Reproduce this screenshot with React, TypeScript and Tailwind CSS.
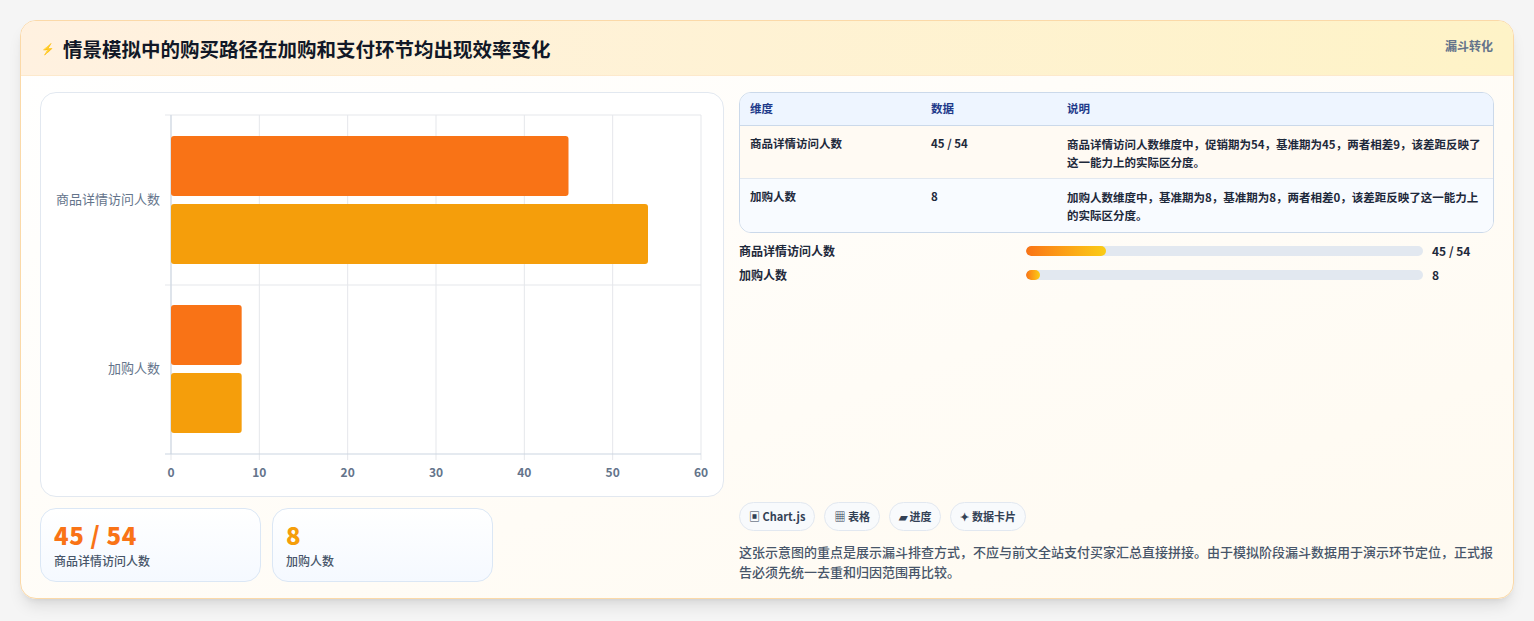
import React from "react";

const font = { fontFamily: '"Noto Sans CJK SC", "Noto Sans", sans-serif' };

const Chart = () => {
  const x0 = 130, x1 = 660, top = 22, bot = 361;
  const sx = (v: number) => x0 + ((x1 - x0) * v) / 60;
  const ticks = [0, 10, 20, 30, 40, 50, 60];
  return (
    <svg width="683" height="404" className="block">
      {ticks.map((t) => (
        <line key={t} x1={sx(t)} x2={sx(t)} y1={top} y2={bot + 6} stroke="#e5e7eb" />
      ))}
      <line x1={x0 - 6} x2={x1} y1={top} y2={top} stroke="#e5e7eb" />
      <line x1={x0 - 6} x2={x1} y1={192} y2={192} stroke="#e5e7eb" />
      <line x1={x0 - 6} x2={x1} y1={bot} y2={bot} stroke="#cbd5e1" />
      <line x1={x0} x2={x0} y1={top} y2={bot} stroke="#cbd5e1" />
      <rect x={x0} y={43} width={sx(45) - x0} height={60} rx={3} fill="#f97316" />
      <rect x={x0} y={111} width={sx(54) - x0} height={60} rx={3} fill="#f59e0b" />
      <rect x={x0} y={212} width={sx(8) - x0} height={60} rx={3} fill="#f97316" />
      <rect x={x0} y={280} width={sx(8) - x0} height={60} rx={3} fill="#f59e0b" />
      <text x={119} y={111} textAnchor="end" fontSize="13" fill="#64748b" style={font}>商品详情访问人数</text>
      <text x={119} y={280} textAnchor="end" fontSize="13" fill="#64748b" style={font}>加购人数</text>
      {ticks.map((t) => (
        <text key={t} x={sx(t)} y={384} textAnchor="middle" fontSize="12" fontWeight="700" fill="#64748b" style={font}>{t}</text>
      ))}
    </svg>
  );
};

const App = () => {
  return (
    <div className="w-[1534px] h-[621px] bg-[#f5f5f5] pt-[20px] px-[20px]" style={font}>
      <div className="w-[1494px] h-[579px] rounded-2xl border border-[#fbd9a8] bg-gradient-to-br from-white to-[#fffaf0] shadow-lg overflow-hidden flex flex-col">
        <div className="h-[55px] shrink-0 flex items-start justify-between px-[20px] bg-gradient-to-r from-[#fff1e0] to-[#fef3c7] border-b border-[#fde9cc]">
          <div className="flex items-center gap-2 h-[55px]">
            <span className="text-[11px] text-[#3b82f6]">⚡</span>
            <h1 className="text-[19.5px] font-bold text-[#111827]">情景模拟中的购买路径在加购和支付环节均出现效率变化</h1>
          </div>
          <span className="text-[12px] font-bold text-[#64748b] mt-[16px]">漏斗转化</span>
        </div>
        <div className="flex-1 flex gap-[15px] px-[19px] pt-[16px] pb-[17px]">
          <div className="w-[684px] flex flex-col gap-[11px]">
            <div className="h-[405px] rounded-2xl border border-[#e2e8f0] bg-white overflow-hidden">
              <Chart />
            </div>
            <div className="flex gap-[11px]">
              {[
                ["45 / 54", "商品详情访问人数", "text-[#f97316]"],
                ["8", "加购人数", "text-[#f59e0b]"],
              ].map(([v, l, c]) => (
                <div key={l} className="w-[221px] h-[74px] rounded-2xl border border-[#dbe7f5] bg-gradient-to-b from-white to-[#f5f9ff] px-[13px] pt-[10px]">
                  <div className={`text-[24px] leading-[32px] font-extrabold tracking-wide ${c}`}>{v}</div>
                  <div className="text-[12px] text-[#475569] font-medium mt-[1px]">{l}</div>
                </div>
              ))}
            </div>
          </div>
          <div className="flex-1 flex flex-col">
            <div className="rounded-xl border border-[#cbd9ea] overflow-hidden text-[11.5px] font-bold text-[#1e293b]">
              <div className="flex h-[33px] items-center bg-[#eef5ff] text-[#1e3a8a] border-b border-[#cbd9ea]">
                <div className="w-[191px] pl-[10px]">维度</div>
                <div className="w-[136px]">数据</div>
                <div className="flex-1">说明</div>
              </div>
              <div className="flex h-[53px] pt-[9px] bg-[#fffaf3] border-b border-[#e2e8f0]">
                <div className="w-[191px] pl-[10px]">商品详情访问人数</div>
                <div className="w-[136px]">45 / 54</div>
                <div className="flex-1 pr-[8px] leading-[18px]">商品详情访问人数维度中，促销期为54，基准期为45，两者相差9，该差距反映了这一能力上的实际区分度。</div>
              </div>
              <div className="flex h-[53px] pt-[9px] bg-[#f8fbff]">
                <div className="w-[191px] pl-[10px]">加购人数</div>
                <div className="w-[136px]">8</div>
                <div className="flex-1 pr-[8px] leading-[18px]">加购人数维度中，基准期为8，基准期为8，两者相差0，该差距反映了这一能力上的实际区分度。</div>
              </div>
            </div>
            <div className="mt-[10px] flex flex-col gap-[8px] text-[12px] font-bold text-[#1e293b]">
              {[
                ["商品详情访问人数", "80px", "45 / 54"],
                ["加购人数", "14px", "8"],
              ].map(([l, w, v]) => (
                <div key={l} className="flex items-center h-[16px]">
                  <div className="w-[287px]">{l}</div>
                  <div className="w-[397px] h-[10px] rounded-full bg-[#e2e8f0] overflow-hidden">
                    <div className="h-full rounded-full bg-gradient-to-r from-[#f97316] to-[#facc15]" style={{ width: w }} />
                  </div>
                  <div className="ml-[9px]">{v}</div>
                </div>
              ))}
            </div>
            <div className="mt-auto flex gap-[9px] text-[11px] font-bold text-[#334155]">
              {["▣ Chart.js", "▦ 表格", "▰ 进度", "✦ 数据卡片"].map((c) => (
                <span key={c} className="h-[29px] px-[9px] flex items-center rounded-full border border-[#e2e8f0] bg-[#f8fafc]">{c}</span>
              ))}
            </div>
            <p className="mt-[11px] text-[13px] leading-[20px] text-[#475569] font-medium">
              这张示意图的重点是展示漏斗排查方式，不应与前文全站支付买家汇总直接拼接。由于模拟阶段漏斗数据用于演示环节定位，正式报告必须先统一去重和归因范围再比较。
            </p>
          </div>
        </div>
      </div>
    </div>
  );
};

export default App;
